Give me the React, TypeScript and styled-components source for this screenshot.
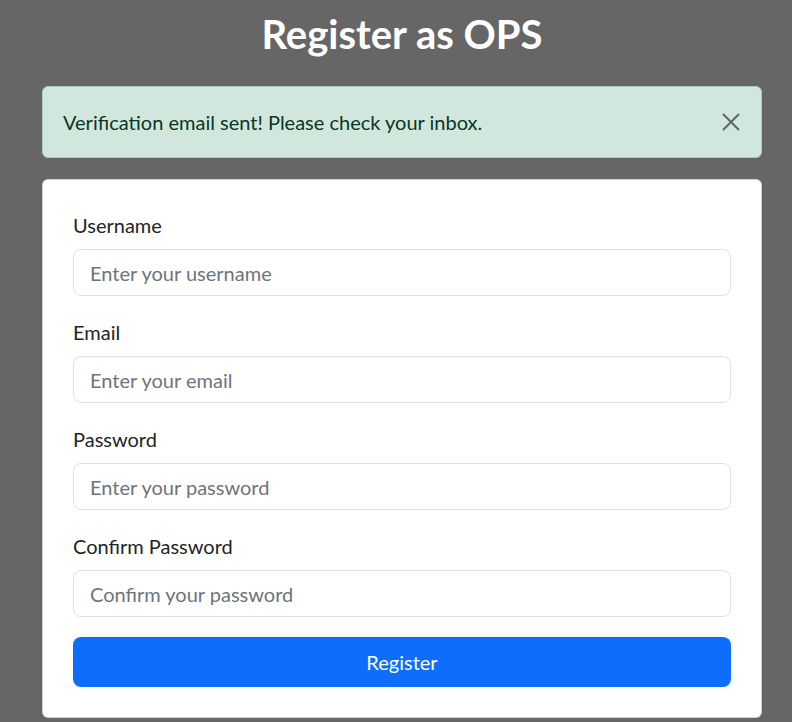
import React from "react";
import styled, { createGlobalStyle } from "styled-components";

const GlobalStyle = createGlobalStyle`
  html, body {
    margin: 0;
    padding: 0;
    background: #666666;
  }
  body {
    font-family: Lato, "Noto Sans", "Liberation Sans", sans-serif;
    color: #212529;
  }
  * { box-sizing: border-box; }
`;

const Container = styled.div`
  width: 720px;
  margin: 0 0 0 42px;
  padding-top: 10px;
`;

const Title = styled.h1`
  margin: 0 0 28px;
  text-align: center;
  color: #ffffff;
  font-size: 40px;
  line-height: 48px;
  height: 48px;
  font-weight: 700;
`;

const Alert = styled.div`
  display: flex;
  align-items: center;
  justify-content: space-between;
  height: 72px;
  padding: 0 20px;
  margin-bottom: 21px;
  background: #d1e7dd;
  border: 1px solid #a3cfbb;
  border-radius: 6px;
  color: #0a3622;
  font-size: 20px;
  line-height: 30px;
`;

const CloseButton = styled.button`
  display: flex;
  align-items: center;
  justify-content: center;
  width: 20px;
  height: 20px;
  padding: 0;
  border: 0;
  background: transparent;
  cursor: pointer;
  opacity: 0.55;
`;

const Card = styled.div`
  background: #ffffff;
  border: 1px solid rgba(0, 0, 0, 0.175);
  border-radius: 6px;
  padding: 30px;
  box-shadow: 0 1px 2px rgba(0, 0, 0, 0.12);
`;

const Field = styled.div`
  margin-bottom: 21px;
`;

const Label = styled.label`
  display: block;
  font-size: 20px;
  line-height: 30px;
  height: 30px;
  margin-bottom: 9px;
  color: #212529;
`;

const Input = styled.input`
  display: block;
  width: 100%;
  height: 47px;
  padding: 0 16px;
  border: 1px solid #dee2e6;
  border-radius: 8px;
  font-family: inherit;
  font-size: 20px;
  color: #212529;
  background: #ffffff;
  outline: none;
  &::placeholder {
    color: #6c757d;
    opacity: 1;
  }
`;

const SubmitButton = styled.button`
  display: block;
  width: 100%;
  height: 50px;
  margin-top: -1px;
  border: 0;
  border-radius: 8px;
  background: #0d6efd;
  color: #ffffff;
  font-family: inherit;
  font-size: 20px;
  cursor: pointer;
`;

const fields = [
  { id: "username", label: "Username", type: "text", placeholder: "Enter your username" },
  { id: "email", label: "Email", type: "email", placeholder: "Enter your email" },
  { id: "password", label: "Password", type: "password", placeholder: "Enter your password" },
  { id: "confirm", label: "Confirm Password", type: "password", placeholder: "Confirm your password" },
];

export default function App() {
  return (
    <>
      <GlobalStyle />
      <Container>
        <Title>Register as OPS</Title>
        <Alert>
          <span>Verification email sent! Please check your inbox.</span>
          <CloseButton aria-label="Close">
            <svg width="20" height="20" viewBox="0 0 20 20">
              <path d="M2 2 L18 18 M18 2 L2 18" stroke="#000" strokeWidth="2" fill="none" />
            </svg>
          </CloseButton>
        </Alert>
        <Card>
          {fields.map((f) => (
            <Field key={f.id}>
              <Label htmlFor={f.id}>{f.label}</Label>
              <Input id={f.id} type={f.type} placeholder={f.placeholder} />
            </Field>
          ))}
          <SubmitButton>Register</SubmitButton>
        </Card>
      </Container>
    </>
  );
}
